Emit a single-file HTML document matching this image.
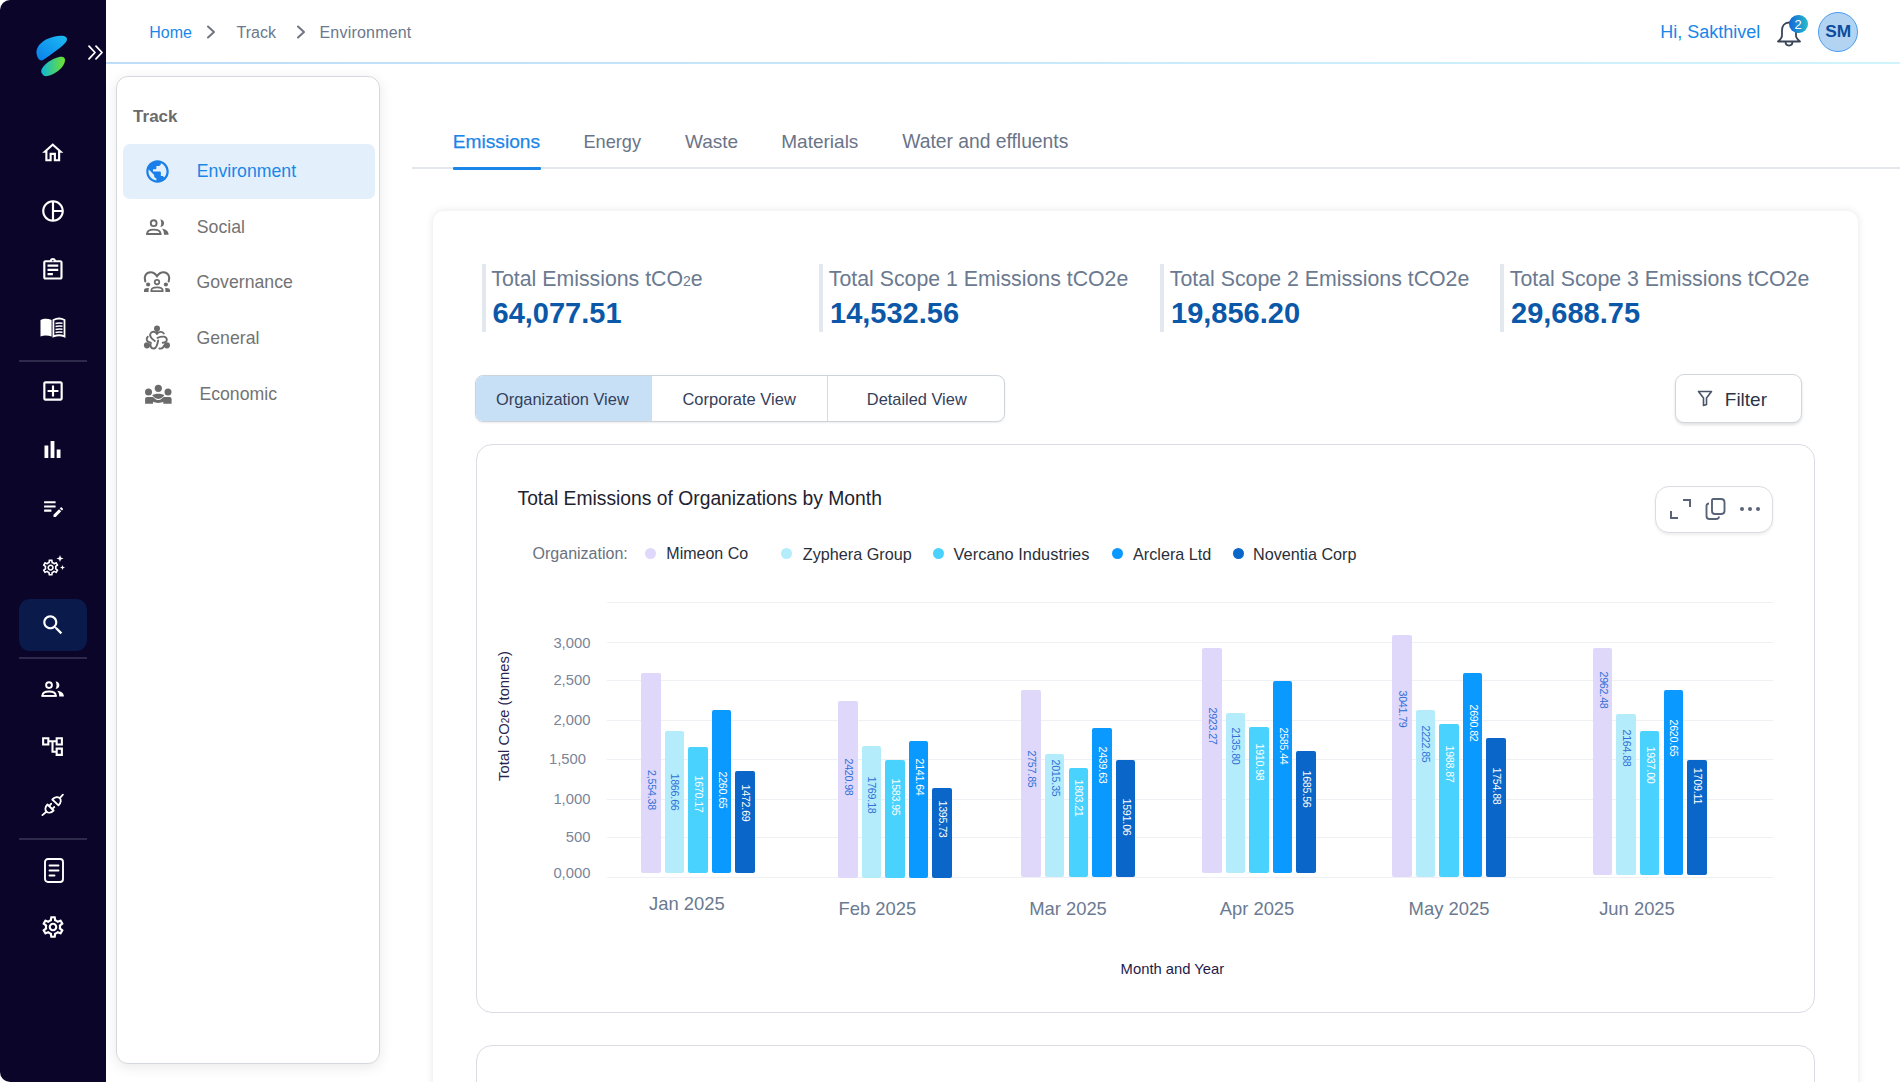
<!DOCTYPE html><html><head><meta charset="utf-8"><style>
*{margin:0;padding:0;box-sizing:border-box}
html,body{width:1900px;height:1082px;overflow:hidden;background:#fff;font-family:"Liberation Sans",sans-serif}
.t{position:absolute;white-space:nowrap}
.ic{position:absolute;overflow:visible}
.abs{position:absolute}
</style></head><body>
<div class="abs" style="left:0;top:0;width:106px;height:1082px;background:#0B0529;border-radius:10px 0 0 10px"></div>
<svg class="ic" style="left:30px;top:30px;width:44px;height:52px" viewBox="30 30 44 52">
<defs><linearGradient id="lg1" x1="0" y1="1" x2="1" y2="0"><stop offset="0" stop-color="#0A7FEA"/><stop offset="1" stop-color="#1DBBF3"/></linearGradient>
<linearGradient id="lg2" x1="0" y1="0" x2="1" y2="0"><stop offset="0" stop-color="#10B6D8"/><stop offset="1" stop-color="#6FE22C"/></linearGradient></defs>
<path d="M37 55.5 C35 50 38 44 46 39.5 C54 35.5 63 34.5 66 37 C68.5 39.5 66 43 61 47 C55 51.5 48 57 43 60 C40 61.5 38 59 37 55.5Z" fill="url(#lg1)"/>
<path d="M42 73.5 C40 71 42 67 47 63 C53 58.5 59.5 56 63 57 C66 58 65.5 62.5 62.5 66.5 C59 71 53 75 47.5 76 C44.5 76.5 43 75.5 42 73.5Z" fill="url(#lg2)"/>
</svg>
<svg class="ic" style="left:88px;top:45px;width:16px;height:15px" viewBox="0 0 16 15" fill="none" stroke="#fff" stroke-width="1.8" stroke-linecap="round" stroke-linejoin="round"><path d="M1 1.2 L7 7.5 L1 13.8"/><path d="M8 1.2 L14 7.5 L8 13.8"/></svg>
<div class="abs" style="left:19px;top:360px;width:68px;height:2px;background:#2E2A4B"></div>
<div class="abs" style="left:19px;top:657px;width:68px;height:2px;background:#2E2A4B"></div>
<div class="abs" style="left:19px;top:838px;width:68px;height:2px;background:#2E2A4B"></div>
<div class="abs" style="left:19px;top:599px;width:68px;height:52px;background:#0A1A4B;border-radius:11px"></div>
<svg class="ic" style="left:40.1px;top:140px;width:25.5px;height:25.5px;" viewBox="0 0 24 24" fill="#FFFFFF"><path d="M12 5.69l5 4.5V18h-2v-6H9v6H7v-7.81l5-4.5M12 3L2 12h3v8h6v-6h2v6h6v-8h3L12 3z"/></svg>
<svg class="ic" style="left:39.5px;top:198px;width:26px;height:26px;" viewBox="0 0 24 24" fill="#FFFFFF"><path d="M12 2C6.48 2 2 6.48 2 12s4.48 10 10 10 10-4.48 10-10S17.52 2 12 2zm7.93 9H13V4.07c3.61.45 6.48 3.32 6.93 6.93zM4 12c0-4.07 3.06-7.44 7-7.93v15.86c-3.94-.49-7-3.86-7-7.930zm9 7.93V13h6.93c-.45 3.61-3.32 6.48-6.93 6.93z"/></svg>
<svg class="ic" style="left:40px;top:257.4px;width:25.8px;height:25.8px;" viewBox="0 0 24 24" fill="#FFFFFF"><path d="M19 3h-4.18C14.4 1.84 13.3 1 12 1s-2.4.84-2.82 2H5c-1.1 0-2 .9-2 2v14c0 1.1.9 2 2 2h14c1.1 0 2-.9 2-2V5c0-1.1-.9-2-2-2zm-7-.25c.41 0 .75.34.75.75s-.34.75-.75.75-.75-.34-.75-.75.34-.75.75-.75zM19 19H5V5h14v14zM7 15h5v2H7zm0-4h10v2H7zm0-4h10v2H7z"/></svg>
<svg class="ic" style="left:40px;top:317.5px;width:25px;height:19px" viewBox="0 0 25 19" fill="#fff"><path d="M0.5 2 C3.5 0.3 8 0.2 11.6 2 V18.5 C8 17 3.5 17 0.5 18.5Z"/><path d="M13.4 2 C17 0.2 21.5 0.3 24.5 2 V18.5 C21.5 17 17 17 13.4 18.5Z" fill="none" stroke="#fff" stroke-width="1.8"/><path d="M15.5 5.5 C17.8 4.8 20.2 4.8 22.5 5.3 M15.5 8.5 C17.8 7.8 20.2 7.8 22.5 8.3 M15.5 11.5 C17.8 10.8 20.2 10.8 22.5 11.3 M15.5 14.5 C17.8 13.8 20.2 13.8 22.5 14.3" stroke="#fff" stroke-width="1.4" fill="none"/></svg>
<svg class="ic" style="left:39.5px;top:378px;width:26px;height:26px;" viewBox="0 0 24 24" fill="#FFFFFF"><path d="M19 3H5c-1.11 0-2 .9-2 2v14c0 1.1.89 2 2 2h14c1.1 0 2-.9 2-2V5c0-1.1-.9-2-2-2zm0 16H5V5h14v14zm-8-2h2v-4h4v-2h-4V7h-2v4H7v2h4z"/></svg>
<svg class="ic" style="left:40px;top:437px;width:25px;height:24px;" viewBox="0 0 24 24" fill="#FFFFFF"><path d="M4 8.5h3.8v12.5H4zM10.1 4h3.8v17h-3.8zM16.2 12.5H20v8.5h-3.8z"/></svg>
<svg class="ic" style="left:40.5px;top:495px;width:25px;height:25px;" viewBox="0 0 24 24" fill="#FFFFFF"><path d="M3 10h11v2H3v-2zm0-2h11V6H3v2zm0 8h7v-2H3v2zm15.01-3.13l.71-.71c.39-.39 1.02-.39 1.41 0l.71.71c.39.39.39 1.02 0 1.410l-.71.71-2.12-2.12zm-.71.71l-5.3 5.3V21h2.12l5.3-5.3-2.12-2.12z"/></svg>
<svg class="ic" style="left:41px;top:554px;width:24px;height:24px" viewBox="0 0 24 24" fill="#fff"><g transform="translate(0,4) scale(0.8)"><path d="M19.43 12.98c.04-.32.07-.64.07-.98 0-.34-.03-.66-.07-.98l2.11-1.65c.19-.15.24-.42.12-.64l-2-3.46c-.09-.16-.26-.25-.44-.25-.06 0-.12.01-.17.03l-2.49 1c-.52-.4-1.08-.73-1.69-.98l-.38-2.65C14.46 2.18 14.25 2 14 2h-4c-.25 0-.46.18-.49.42l-.38 2.65c-.61.25-1.17.59-1.69.98l-2.49-1c-.06-.02-.12-.03-.18-.03-.17 0-.34.09-.43.25l-2 3.46c-.13.22-.07.49.12.64l2.11 1.65c-.04.32-.07.65-.07.98 0 .33.03.66.07.98l-2.11 1.65c-.19.15-.24.42-.12.64l2 3.46c.09.16.26.25.44.25.06 0 .12-.01.17-.03l2.49-1c.52.4 1.08.73 1.69.98l.38 2.65c.03.24.24.42.49.42h4c.25 0 .46-.18.49-.42l.38-2.65c.61-.25 1.17-.59 1.69-.98l2.49 1c.06.02.12.03.18.03.17 0 .34-.09.43-.25l2-3.46c.12-.22.07-.49-.12-.64l-2.11-1.65zm-1.98-1.71c.04.31.05.52.05.73 0 .21-.02.43-.05.73l-.14 1.13.89.7 1.08.84-.7 1.21-1.27-.51-1.04-.42-.9.68c-.43.32-.84.56-1.25.73l-1.06.43-.16 1.13-.2 1.35h-1.4l-.19-1.35-.16-1.13-1.06-.43c-.43-.18-.83-.41-1.23-.71l-.91-.7-1.06.43-1.27.51-.7-1.21 1.08-.84.89-.7-.14-1.13c-.03-.31-.05-.54-.05-.74s.02-.43.05-.73l.14-1.13-.89-.7-1.08-.84.7-1.21 1.27.51 1.04.42.9-.68c.43-.32.84-.56 1.25-.73l1.06-.43.16-1.13.2-1.35h1.39l.19 1.35.16 1.13 1.06.43c.43.18.83.41 1.23.71l.91.7 1.06-.43 1.27-.51.7 1.21-1.07.85-.89.7.14 1.13zM12 8c-2.21 0-4 1.79-4 4s1.79 4 4 4 4-1.79 4-4-1.79-4-4-4zm0 6c-1.1 0-2-.9-2-2s.9-2 2-2 2 .9 2 2-.9 2-2 2z"/></g><path d="M19 1 L19.9 3.6 L22.5 4.5 L19.9 5.4 L19 8 L18.1 5.4 L15.5 4.5 L18.1 3.6Z"/><path d="M21.5 11 L22.2 12.8 L24 13.5 L22.2 14.2 L21.5 16 L20.8 14.2 L19 13.5 L20.8 12.8Z"/></svg>
<svg class="ic" style="left:40px;top:612px;width:26px;height:26px;" viewBox="0 0 24 24" fill="#FFFFFF"><path d="M15.5 14h-.79l-.28-.27C15.41 12.59 16 11.11 16 9.5 16 5.91 13.09 3 9.5 3S3 5.91 3 9.5 5.91 16 9.5 16c1.61 0 3.09-.59 4.23-1.57l.27.28v.79l5 4.99L20.49 19l-4.99-5zm-6 0C7.01 14 5 11.99 5 9.5S7.01 5 9.5 5 14 7.01 14 9.5 11.99 14 9.5 14z"/></svg>
<svg class="ic" style="left:36px;top:676px;width:32px;height:24px" viewBox="36 676 32 24" fill="#fff"><g transform="translate(-104.7,461.9)"><circle cx="153.7" cy="223.2" r="2.9" fill="none" stroke="#fff" stroke-width="1.9"/><path d="M160.3 219.6 C165.3 219.6 165.3 227 160.3 227 C161.6 225 161.6 221.6 160.3 219.6Z"/><path d="M147.2 234 V233.6 C147.2 231 150.2 229.6 153.8 229.6 C157.4 229.6 160.4 231 160.4 233.6 V234Z" fill="none" stroke="#fff" stroke-width="1.9"/><path d="M162 228.8 C166.5 229.2 168.6 231.5 168.6 234.7 H164 C164 232.2 163.4 230.4 162 228.8Z"/><rect x="146.2" y="233.2" width="15.2" height="1.5"/></g></svg>
<svg class="ic" style="left:40px;top:734px;width:25px;height:25px;" viewBox="0 0 24 24" fill="#FFFFFF"><path d="M22 11V3h-7v3H9V3H2v8h7V8h2v10h4v3h7v-8h-7v3h-2V8h2v3h7zM7 9H4V5h3v4zm10 6h3v4h-3v-4zm0-10h3v4h-3V5z"/></svg>
<svg class="ic" style="left:36px;top:788px;width:34px;height:34px" viewBox="36 788 34 34" fill="none" stroke="#fff" stroke-width="1.8" stroke-linecap="round" stroke-linejoin="round"><path d="M47.5 804.5 C42.05 809.95 48.15 815.95 53.6 810.5 Z"/><path d="M49.3 805.9 L51.1 803.8 M52.3 808.9 L54.3 807"/><path d="M46.4 811.7 L42.4 815.1"/><path d="M52.3 799.5 C58.03 793.77 64.23 799.67 58.5 805.4 Z"/><path d="M59.8 798.1 L62.9 794.7"/></svg>
<svg class="ic" style="left:44px;top:858px;width:20px;height:25px" viewBox="0 0 20 25" fill="none" stroke="#fff" stroke-width="1.9"><rect x="1" y="1" width="18" height="23" rx="3"/><path d="M5.5 7.5h9M5.5 12.5h9M5.5 17.5h5" stroke-linecap="round"/></svg>
<svg class="ic" style="left:39.5px;top:914px;width:26px;height:26px;" viewBox="0 0 24 24" fill="#FFFFFF"><path d="M19.43 12.98c.04-.32.07-.64.07-.98 0-.34-.03-.66-.07-.98l2.11-1.65c.19-.15.24-.42.12-.64l-2-3.46c-.09-.16-.26-.25-.44-.25-.06 0-.12.01-.17.03l-2.49 1c-.52-.4-1.08-.73-1.69-.98l-.38-2.65C14.46 2.18 14.25 2 14 2h-4c-.25 0-.46.18-.49.42l-.38 2.65c-.61.25-1.17.59-1.69.98l-2.49-1c-.06-.02-.12-.03-.18-.03-.17 0-.34.09-.43.25l-2 3.46c-.13.22-.07.49.12.64l2.11 1.65c-.04.32-.07.65-.07.98 0 .33.03.66.07.98l-2.11 1.65c-.19.15-.24.42-.12.64l2 3.46c.09.16.26.25.44.25.06 0 .12-.01.17-.03l2.49-1c.52.4 1.08.73 1.69.98l.38 2.65c.03.24.24.42.49.42h4c.25 0 .46-.18.49-.42l.38-2.65c.61-.25 1.17-.59 1.69-.98l2.49 1c.06.02.12.03.18.03.17 0 .34-.09.43-.25l2-3.46c.12-.22.07-.49-.12-.64l-2.11-1.65zm-1.98-1.71c.04.31.05.52.05.73 0 .21-.02.43-.05.73l-.14 1.13.89.7 1.08.84-.7 1.21-1.27-.51-1.04-.42-.9.68c-.43.32-.84.56-1.25.73l-1.06.43-.16 1.13-.2 1.35h-1.4l-.19-1.35-.16-1.13-1.06-.43c-.43-.18-.83-.41-1.23-.71l-.91-.7-1.06.43-1.27.51-.7-1.21 1.08-.84.89-.7-.14-1.13c-.03-.31-.05-.54-.05-.74s.02-.43.05-.73l.14-1.13-.89-.7-1.08-.84.7-1.21 1.27.51 1.04.42.9-.68c.43-.32.84-.56 1.25-.73l1.06-.43.16-1.13.2-1.35h1.39l.19 1.35.16 1.13 1.06.43c.43.18.83.41 1.23.71l.91.7 1.06-.43 1.27-.51.7 1.21-1.07.85-.89.7.14 1.13zM12 8c-2.21 0-4 1.79-4 4s1.79 4 4 4 4-1.79 4-4-1.79-4-4-4zm0 6c-1.1 0-2-.9-2-2s.9-2 2-2 2 .9 2 2-.9 2-2 2z"/></svg>
<div class="abs" style="left:106px;top:62px;width:1794px;height:2px;background:linear-gradient(90deg,#BEDDF9,#D0F4FC)"></div>
<div class="t " style="left:149.3px;top:24.9px;font-size:16px;line-height:16px;color:#1A86E8;">Home</div>
<svg class="ic" style="left:206px;top:25px;width:10px;height:14px" viewBox="0 0 10 14" fill="none" stroke="#6E7480" stroke-width="2" stroke-linecap="round" stroke-linejoin="round"><path d="M2 1.5 L8 7 L2 12.5"/></svg>
<div class="t " style="left:236.6px;top:24.9px;font-size:16px;line-height:16px;color:#6B788D;">Track</div>
<svg class="ic" style="left:296px;top:25px;width:10px;height:14px" viewBox="0 0 10 14" fill="none" stroke="#6E7480" stroke-width="2" stroke-linecap="round" stroke-linejoin="round"><path d="M2 1.5 L8 7 L2 12.5"/></svg>
<div class="t " style="left:319.5px;top:24.9px;font-size:16px;line-height:16px;color:#6B788D;letter-spacing:0.2px">Environment</div>
<div class="t " style="left:1660.3px;top:22.7px;font-size:18px;line-height:18px;color:#1A86E8;">Hi, Sakthivel</div>
<svg class="ic" style="left:1776px;top:19px;width:26px;height:28px" viewBox="0 0 26 28" fill="none" stroke="#3A4558" stroke-width="1.8" stroke-linejoin="round"><path d="M13 3.5 C8.5 3.5 6 7 6 11 V16.5 C6 19 4.5 20.5 2 22.5 H24 C21.5 20.5 20 19 20 16.5 V11 C20 7 17.5 3.5 13 3.5Z"/><path d="M9.5 22.5 C9.5 25 11 26.5 13 26.5 C15 26.5 16.5 25 16.5 22.5"/></svg>
<div class="abs" style="left:1789px;top:14.5px;width:18.5px;height:18.5px;border-radius:50%;background:linear-gradient(90deg,#1565D8,#29BBC9)"></div>
<div class="t " style="left:1794.6px;top:18.0px;font-size:13px;line-height:13px;color:#fff;">2</div>
<div class="abs" style="left:1818px;top:12px;width:40px;height:40px;border-radius:50%;background:#B3D3F2;border:1px solid #4A9CF0"></div>
<div class="t " style="left:1825.3px;top:23.4px;font-size:17.3px;line-height:17.3px;color:#0B4C9C;font-weight:700;">SM</div>
<div class="abs" style="left:116px;top:75.5px;width:264px;height:988.5px;background:#fff;border:1.8px solid #D5D9DE;border-radius:12px;box-shadow:0 3px 14px rgba(0,0,0,0.09)"></div>
<div class="t " style="left:133.1px;top:107.8px;font-size:17px;line-height:17px;color:#6B6B6B;font-weight:700;">Track</div>
<div class="abs" style="left:123px;top:144px;width:252px;height:55px;background:#E3F0FC;border-radius:7px"></div>
<svg class="ic" style="left:143.5px;top:158px;width:27px;height:27px;" viewBox="0 0 24 24" fill="#1A7FE8"><path d="M12 2C6.48 2 2 6.48 2 12s4.48 10 10 10 10-4.48 10-10S17.52 2 12 2zm-1 17.93c-3.95-.49-7-3.85-7-7.93 0-.62.08-1.21.21-1.79L9 15v1c0 1.1.9 2 2 2v1.93zm6.9-2.54c-.26-.81-1-1.39-1.9-1.39h-1v-3c0-.55-.45-1-1-1H8v-2h2c.55 0 1-.45 1-1V7h2c1.1 0 2-.9 2-2v-.41c2.93 1.19 5 4.06 5 7.41 0 2.08-.8 3.97-2.1 5.39z"/></svg>
<div class="t " style="left:196.8px;top:163.4px;font-size:17.7px;line-height:17.7px;color:#1A86E8;">Environment</div>
<svg class="ic" style="left:140px;top:214px;width:32px;height:26px" viewBox="140 214 32 26" fill="#6B6B6B" stroke="none"><circle cx="153.7" cy="223.2" r="2.9" fill="none" stroke="#6B6B6B" stroke-width="1.9"/><path d="M160.3 219.6 C165.3 219.6 165.3 227 160.3 227 C161.6 225 161.6 221.6 160.3 219.6Z"/><path d="M147.2 234 V233.6 C147.2 231 150.2 229.6 153.8 229.6 C157.4 229.6 160.4 231 160.4 233.6 V234Z" fill="none" stroke="#6B6B6B" stroke-width="1.9"/><path d="M162 228.8 C166.5 229.2 168.6 231.5 168.6 234.7 H164 C164 232.2 163.4 230.4 162 228.8Z"/><rect x="146.2" y="233.2" width="15.2" height="1.5"/></svg>
<div class="t " style="left:196.8px;top:218.9px;font-size:17.7px;line-height:17.7px;color:#737373;">Social</div>
<svg class="ic" style="left:140px;top:268px;width:34px;height:28px" viewBox="140 268 34 28" fill="#6B6B6B"><path d="M145.3 281.4 C143.8 277.5 145.2 272.3 150.6 272.2 C153.3 272.2 155.5 273.9 157 276.2 C158.5 273.9 160.7 272.2 163.4 272.2 C168.8 272.3 170.2 277.5 168.7 281.4" fill="none" stroke="#6B6B6B" stroke-width="2.1" stroke-linecap="round"/><circle cx="157" cy="282.1" r="2.3" fill="none" stroke="#6B6B6B" stroke-width="1.7"/><circle cx="148.1" cy="284.5" r="2.1"/><circle cx="165.9" cy="284.5" r="2.1"/><path d="M151.3 291.2 V290.6 C151.3 288.4 153.8 287.4 157 287.4 C160.2 287.4 162.7 288.4 162.7 290.6 V291.2Z" fill="none" stroke="#6B6B6B" stroke-width="1.7"/><path d="M144 292 V290.2 C144 288.8 145.4 288 147.8 288 H148.9 C148.6 288.8 148.6 289.6 148.6 290.4 V292Z"/><path d="M170 292 V290.2 C170 288.8 168.6 288 166.2 288 H165.1 C165.4 288.8 165.4 289.6 165.4 290.4 V292Z"/></svg>
<div class="t " style="left:196.5px;top:274.4px;font-size:17.7px;line-height:17.7px;color:#737373;">Governance</div>
<svg class="ic" style="left:140px;top:322px;width:34px;height:32px" viewBox="140 322 34 32" fill="#6B6B6B"><circle cx="157" cy="328.5" r="3"/><circle cx="147" cy="345.3" r="3.1"/><circle cx="166.9" cy="345.3" r="3.1"/><path d="M157 331 L157 334 M157 334 C155.5 331.5 152.5 331 150.8 333 C149.3 335 150.2 337.8 154.8 341 M157 334 C158.5 331.8 161.8 330.8 163.8 333.5 M157.5 337.8 C162 336 166 336 166.8 339.2 C167.3 341.5 165 342.6 162.7 342.7 M158.1 340.5 C157.5 344.5 156.5 348.3 153.8 348.5 C151 348.7 149.8 346 150.8 343 M147.8 336.8 C146 338.5 146 341.8 150.8 342.6 M159.4 348.5 C161.8 349 163.5 347.5 164 345.6" fill="none" stroke="#6B6B6B" stroke-width="1.9" stroke-linecap="round"/></svg>
<div class="t " style="left:196.5px;top:329.7px;font-size:17.7px;line-height:17.7px;color:#737373;">General</div>
<svg class="ic" style="left:140px;top:380px;width:36px;height:28px" viewBox="140 380 36 28" fill="#6B6B6B"><circle cx="158.3" cy="388.3" r="3.6"/><circle cx="148.5" cy="392.1" r="3.5"/><circle cx="168" cy="392.1" r="3.5"/><path d="M152.2 395.3 C155 393.3 161.6 393.3 164.4 395.3 C163 397 161 398.9 158.3 398.9 C155.6 398.9 153.6 397 152.2 395.3Z"/><path d="M145.1 403.8 V399 C145.1 397.8 146 396.9 147.2 396.9 H152 C153.2 396.9 154 397.6 154.8 398.4 C156 399.6 157 400.1 158.3 400.1 C159.6 400.1 160.6 399.6 161.8 398.4 C162.6 397.6 163.4 396.9 164.6 396.9 H169.5 C170.7 396.9 171.6 397.8 171.6 399 V403.8 H163.3 V401.8 C162 402.6 160.3 402.9 158.3 402.9 C156.3 402.9 154.6 402.6 153 401.8 V403.8Z"/></svg>
<div class="t " style="left:199.4px;top:385.7px;font-size:17.7px;line-height:17.7px;color:#737373;">Economic</div>
<div class="abs" style="left:412px;top:167px;width:1488px;height:2px;background:#E4E8EC"></div>
<div class="abs" style="left:452.5px;top:166.5px;width:88.5px;height:3px;background:#1A86E8;border-radius:1px"></div>
<div class="t " style="left:452.7px;top:131.9px;font-size:19.2px;line-height:19.2px;color:#1A86E8;-webkit-text-stroke:0.25px #1A86E8">Emissions</div>
<div class="t " style="left:583.4px;top:132.8px;font-size:18.2px;line-height:18.2px;color:#6A7488;">Energy</div>
<div class="t " style="left:685.0px;top:132.1px;font-size:19px;line-height:19px;color:#6A7488;">Waste</div>
<div class="t " style="left:781.3px;top:132.1px;font-size:19px;line-height:19px;color:#6A7488;">Materials</div>
<div class="t " style="left:902.2px;top:131.9px;font-size:19.3px;line-height:19.3px;color:#6A7488;">Water and effluents</div>
<div class="abs" style="left:433px;top:210.8px;width:1425px;height:900px;background:#fff;border-radius:11px;box-shadow:0 0 9px rgba(0,0,0,0.10)"></div>
<div class="abs" style="left:481.5px;top:264px;width:4px;height:68px;background:#E3E7EE"></div>
<div class="t " style="left:491.3px;top:268.5px;font-size:21.3px;line-height:21.3px;color:#6B7A90;">Total Emissions tCO<span style="font-size:14px">2</span>e</div>
<div class="t " style="left:492.5px;top:298.7px;font-size:29px;line-height:29px;color:#0B57A8;font-weight:700;">64,077.51</div>
<div class="abs" style="left:819px;top:264px;width:4px;height:68px;background:#E3E7EE"></div>
<div class="t " style="left:828.8px;top:268.5px;font-size:21.3px;line-height:21.3px;color:#6B7A90;">Total Scope 1 Emissions tCO2e</div>
<div class="t " style="left:830.0px;top:298.7px;font-size:29px;line-height:29px;color:#0B57A8;font-weight:700;">14,532.56</div>
<div class="abs" style="left:1160px;top:264px;width:4px;height:68px;background:#E3E7EE"></div>
<div class="t " style="left:1169.8px;top:268.5px;font-size:21.3px;line-height:21.3px;color:#6B7A90;">Total Scope 2 Emissions tCO2e</div>
<div class="t " style="left:1171.0px;top:298.7px;font-size:29px;line-height:29px;color:#0B57A8;font-weight:700;">19,856.20</div>
<div class="abs" style="left:1500px;top:264px;width:4px;height:68px;background:#E3E7EE"></div>
<div class="t " style="left:1509.8px;top:268.5px;font-size:21.3px;line-height:21.3px;color:#6B7A90;">Total Scope 3 Emissions tCO2e</div>
<div class="t " style="left:1511.0px;top:298.7px;font-size:29px;line-height:29px;color:#0B57A8;font-weight:700;">29,688.75</div>
<div class="abs" style="left:475px;top:375px;width:530px;height:47px;border:1.5px solid #CDD3DB;border-radius:8px;overflow:hidden;box-shadow:0 1px 2px rgba(0,0,0,0.08)"><div class="abs" style="left:0;top:0;width:176px;height:47px;background:#C8E0F6"></div><div class="abs" style="left:175px;top:0;width:1.2px;height:47px;background:#D6DBE1"></div><div class="abs" style="left:351px;top:0;width:1.2px;height:47px;background:#D6DBE1"></div></div>
<div class="t " style="left:496.0px;top:391.3px;font-size:16.4px;line-height:16.4px;color:#34405A;">Organization View</div>
<div class="t " style="left:682.4px;top:391.2px;font-size:16.5px;line-height:16.5px;color:#34405A;">Corporate View</div>
<div class="t " style="left:866.8px;top:391.3px;font-size:16.4px;line-height:16.4px;color:#34405A;">Detailed View</div>
<div class="abs" style="left:1675px;top:374px;width:127px;height:49px;border:1.5px solid #D0D6DE;border-radius:9px;box-shadow:0 2px 3px rgba(0,0,0,0.12);background:#fff"></div>
<svg class="ic" style="left:1697px;top:390px;width:16px;height:17px" viewBox="0 0 16 17" fill="none" stroke="#4A5568" stroke-width="1.6" stroke-linejoin="round"><path d="M1.5 1.5 H14.5 L9.5 8 V14.5 L6.5 15.5 V8Z"/></svg>
<div class="t " style="left:1724.8px;top:390.3px;font-size:19px;line-height:19px;color:#2A3548;">Filter</div>
<div class="abs" style="left:476px;top:444px;width:1339px;height:569px;border:1.5px solid #D9DCE3;border-radius:16px;background:#fff"></div>
<div class="abs" style="left:476px;top:1045px;width:1339px;height:100px;border:1.5px solid #D9DCE3;border-radius:16px;background:#fff"></div>
<div class="t " style="left:517.5px;top:488.7px;font-size:19.3px;line-height:19.3px;color:#1E2330;">Total Emissions of Organizations by Month</div>
<div class="abs" style="left:1655px;top:486px;width:118px;height:47px;border:1.5px solid #DADDE3;border-radius:14px;box-shadow:0 2px 3px rgba(0,0,0,0.07);background:#fff"></div>
<svg class="ic" style="left:1670px;top:499px;width:21px;height:20px" viewBox="0 0 21 20" fill="none" stroke="#5A6478" stroke-width="2"><path d="M13 1 H20 V8"/><path d="M1 12 V19 H8"/></svg>
<svg class="ic" style="left:1705px;top:498px;width:21px;height:22px" viewBox="0 0 21 22" fill="none" stroke="#5A6478" stroke-width="1.9" stroke-linejoin="round"><path d="M8 1 H16 C18 1 19.5 2.5 19.5 4.5 V13 C19.5 15 18 16 16 16 H10 C8.5 16 7 15 7 13 V2.5 C7 1.5 7.5 1 8 1Z"/><path d="M4 5.5 C2.5 5.5 1.5 6.5 1.5 8 V18 C1.5 19.8 2.5 21 4.5 21 H11 C13 21 14 20 14 18.5"/></svg>
<div class="abs" style="left:1739.8px;top:506.8px;width:4.4px;height:4.4px;border-radius:50%;background:#5A6478"></div>
<div class="abs" style="left:1747.8px;top:506.8px;width:4.4px;height:4.4px;border-radius:50%;background:#5A6478"></div>
<div class="abs" style="left:1755.8px;top:506.8px;width:4.4px;height:4.4px;border-radius:50%;background:#5A6478"></div>
<div class="t " style="left:532.6px;top:546.0px;font-size:16px;line-height:16px;color:#6B7280;">Organization:</div>
<div class="abs" style="left:645.0px;top:548px;width:11px;height:11px;border-radius:50%;background:#DFD8FB"></div>
<div class="t " style="left:666.3px;top:546.0px;font-size:16px;line-height:16px;color:#2A2F3A;">Mimeon Co</div>
<div class="abs" style="left:781.0px;top:548px;width:11px;height:11px;border-radius:50%;background:#B5ECFC"></div>
<div class="t " style="left:802.8px;top:545.8px;font-size:16.2px;line-height:16.2px;color:#2A2F3A;">Zyphera Group</div>
<div class="abs" style="left:932.9px;top:548px;width:11px;height:11px;border-radius:50%;background:#4AD2FE"></div>
<div class="t " style="left:953.6px;top:545.6px;font-size:16.4px;line-height:16.4px;color:#2A2F3A;">Vercano Industries</div>
<div class="abs" style="left:1112.0px;top:548px;width:11px;height:11px;border-radius:50%;background:#0A99FF"></div>
<div class="t " style="left:1133.0px;top:545.8px;font-size:16.2px;line-height:16.2px;color:#2A2F3A;">Arclera Ltd</div>
<div class="abs" style="left:1232.5px;top:548px;width:11px;height:11px;border-radius:50%;background:#0A66C8"></div>
<div class="t " style="left:1253.0px;top:545.8px;font-size:16.2px;line-height:16.2px;color:#2A2F3A;">Noventia Corp</div>
<div class="abs" style="left:607px;top:601.5px;width:1166px;height:1px;background:#EEF0F3"></div>
<div class="abs" style="left:607px;top:641.5px;width:1166px;height:1px;background:#EEF0F3"></div>
<div class="abs" style="left:607px;top:679.5px;width:1166px;height:1px;background:#EEF0F3"></div>
<div class="abs" style="left:607px;top:719.5px;width:1166px;height:1px;background:#EEF0F3"></div>
<div class="abs" style="left:607px;top:758.5px;width:1166px;height:1px;background:#EEF0F3"></div>
<div class="abs" style="left:607px;top:798.5px;width:1166px;height:1px;background:#EEF0F3"></div>
<div class="abs" style="left:607px;top:836.5px;width:1166px;height:1px;background:#EEF0F3"></div>
<div class="abs" style="left:607px;top:876.5px;width:1166px;height:1px;background:#EEF0F3"></div>
<div class="t" style="right:1309.6px;top:635.8000000000001px;font-size:14.8px;line-height:15px;color:#7A8599">3,000</div>
<div class="t" style="right:1309.6px;top:673.1px;font-size:14.8px;line-height:15px;color:#7A8599">2,500</div>
<div class="t" style="right:1309.6px;top:712.6px;font-size:14.8px;line-height:15px;color:#7A8599">2,000</div>
<div class="t" style="right:1314px;top:752.1px;font-size:14.8px;line-height:15px;color:#7A8599">1,500</div>
<div class="t" style="right:1309.6px;top:791.6px;font-size:14.8px;line-height:15px;color:#7A8599">1,000</div>
<div class="t" style="right:1309.6px;top:829.8000000000001px;font-size:14.8px;line-height:15px;color:#7A8599">500</div>
<div class="t" style="right:1309.6px;top:865.9px;font-size:14.8px;line-height:15px;color:#7A8599">0,000</div>
<div class="t" style="left:505px;top:715.5px;font-size:14.8px;line-height:15px;color:#2A2550;transform:translate(-50%,-50%) rotate(-90deg)">Total CO<span style="font-size:10px">2</span>e (tonnes)</div>
<div class="abs" style="left:641.0px;top:673px;width:19.5px;height:200px;background:#DFD8FB;border-radius:2px"></div>
<div class="t" style="left:650.8px;top:790px;font-size:10.7px;line-height:11px;color:#2F6FD6;transform:translate(-50%,-50%) rotate(90deg);letter-spacing:-0.2px">2,554.38</div>
<div class="abs" style="left:664.6px;top:731px;width:19.5px;height:142px;background:#B5ECFC;border-radius:2px"></div>
<div class="t" style="left:674.4px;top:792px;font-size:10.7px;line-height:11px;color:#2F6FD6;transform:translate(-50%,-50%) rotate(90deg);letter-spacing:-0.2px">1866.66</div>
<div class="abs" style="left:688.2px;top:747px;width:19.5px;height:126px;background:#4AD2FE;border-radius:2px"></div>
<div class="t" style="left:698.0px;top:794px;font-size:10.7px;line-height:11px;color:#FFFFFF;transform:translate(-50%,-50%) rotate(90deg);letter-spacing:-0.2px">1670.17</div>
<div class="abs" style="left:711.8px;top:710px;width:19.5px;height:163px;background:#0A99FF;border-radius:2px"></div>
<div class="t" style="left:721.5px;top:790px;font-size:10.7px;line-height:11px;color:#FFFFFF;transform:translate(-50%,-50%) rotate(90deg);letter-spacing:-0.2px">2260.65</div>
<div class="abs" style="left:735.4px;top:771px;width:19.5px;height:102px;background:#0A66C8;border-radius:2px"></div>
<div class="t" style="left:745.1px;top:803px;font-size:10.7px;line-height:11px;color:#FFFFFF;transform:translate(-50%,-50%) rotate(90deg);letter-spacing:-0.2px">1472.69</div>
<div class="t" style="left:686.8px;top:903px;font-size:18.4px;line-height:19px;color:#6B7A90;transform:translate(-50%,-50%)">Jan 2025</div>
<div class="abs" style="left:838.0px;top:701px;width:19.5px;height:177px;background:#DFD8FB;border-radius:2px"></div>
<div class="t" style="left:847.8px;top:776.5px;font-size:10.7px;line-height:11px;color:#2F6FD6;transform:translate(-50%,-50%) rotate(90deg);letter-spacing:-0.2px">2420.98</div>
<div class="abs" style="left:861.6px;top:746px;width:19.5px;height:132px;background:#B5ECFC;border-radius:2px"></div>
<div class="t" style="left:871.4px;top:795px;font-size:10.7px;line-height:11px;color:#2F6FD6;transform:translate(-50%,-50%) rotate(90deg);letter-spacing:-0.2px">1769.18</div>
<div class="abs" style="left:885.2px;top:760px;width:19.5px;height:118px;background:#4AD2FE;border-radius:2px"></div>
<div class="t" style="left:895.0px;top:796.6px;font-size:10.7px;line-height:11px;color:#FFFFFF;transform:translate(-50%,-50%) rotate(90deg);letter-spacing:-0.2px">1583.95</div>
<div class="abs" style="left:908.8px;top:741px;width:19.5px;height:137px;background:#0A99FF;border-radius:2px"></div>
<div class="t" style="left:918.5px;top:777px;font-size:10.7px;line-height:11px;color:#FFFFFF;transform:translate(-50%,-50%) rotate(90deg);letter-spacing:-0.2px">2141.64</div>
<div class="abs" style="left:932.4px;top:788px;width:19.5px;height:90px;background:#0A66C8;border-radius:2px"></div>
<div class="t" style="left:942.1px;top:819px;font-size:10.7px;line-height:11px;color:#FFFFFF;transform:translate(-50%,-50%) rotate(90deg);letter-spacing:-0.2px">1395.73</div>
<div class="t" style="left:877.3px;top:908px;font-size:18.4px;line-height:19px;color:#6B7A90;transform:translate(-50%,-50%)">Feb 2025</div>
<div class="abs" style="left:1021.3px;top:690px;width:19.5px;height:187px;background:#DFD8FB;border-radius:2px"></div>
<div class="t" style="left:1031.0px;top:768.6px;font-size:10.7px;line-height:11px;color:#2F6FD6;transform:translate(-50%,-50%) rotate(90deg);letter-spacing:-0.2px">2757.85</div>
<div class="abs" style="left:1044.9px;top:754px;width:19.5px;height:123px;background:#B5ECFC;border-radius:2px"></div>
<div class="t" style="left:1054.6px;top:778px;font-size:10.7px;line-height:11px;color:#2F6FD6;transform:translate(-50%,-50%) rotate(90deg);letter-spacing:-0.2px">2015.35</div>
<div class="abs" style="left:1068.5px;top:768px;width:19.5px;height:109px;background:#4AD2FE;border-radius:2px"></div>
<div class="t" style="left:1078.2px;top:798px;font-size:10.7px;line-height:11px;color:#FFFFFF;transform:translate(-50%,-50%) rotate(90deg);letter-spacing:-0.2px">1803.21</div>
<div class="abs" style="left:1092.1px;top:728px;width:19.5px;height:149px;background:#0A99FF;border-radius:2px"></div>
<div class="t" style="left:1101.8px;top:765px;font-size:10.7px;line-height:11px;color:#FFFFFF;transform:translate(-50%,-50%) rotate(90deg);letter-spacing:-0.2px">2439.63</div>
<div class="abs" style="left:1115.7px;top:760px;width:19.5px;height:117px;background:#0A66C8;border-radius:2px"></div>
<div class="t" style="left:1125.5px;top:817px;font-size:10.7px;line-height:11px;color:#FFFFFF;transform:translate(-50%,-50%) rotate(90deg);letter-spacing:-0.2px">1591.06</div>
<div class="t" style="left:1068px;top:908px;font-size:18.4px;line-height:19px;color:#6B7A90;transform:translate(-50%,-50%)">Mar 2025</div>
<div class="abs" style="left:1202.0px;top:648px;width:19.5px;height:225px;background:#DFD8FB;border-radius:2px"></div>
<div class="t" style="left:1211.8px;top:725.7px;font-size:10.7px;line-height:11px;color:#2F6FD6;transform:translate(-50%,-50%) rotate(90deg);letter-spacing:-0.2px">2923.27</div>
<div class="abs" style="left:1225.6px;top:713px;width:19.5px;height:160px;background:#B5ECFC;border-radius:2px"></div>
<div class="t" style="left:1235.3px;top:746px;font-size:10.7px;line-height:11px;color:#2F6FD6;transform:translate(-50%,-50%) rotate(90deg);letter-spacing:-0.2px">2135.80</div>
<div class="abs" style="left:1249.2px;top:727px;width:19.5px;height:146px;background:#4AD2FE;border-radius:2px"></div>
<div class="t" style="left:1259.0px;top:762px;font-size:10.7px;line-height:11px;color:#FFFFFF;transform:translate(-50%,-50%) rotate(90deg);letter-spacing:-0.2px">1910.98</div>
<div class="abs" style="left:1272.8px;top:681px;width:19.5px;height:192px;background:#0A99FF;border-radius:2px"></div>
<div class="t" style="left:1282.5px;top:746px;font-size:10.7px;line-height:11px;color:#FFFFFF;transform:translate(-50%,-50%) rotate(90deg);letter-spacing:-0.2px">2585.44</div>
<div class="abs" style="left:1296.4px;top:751px;width:19.5px;height:122px;background:#0A66C8;border-radius:2px"></div>
<div class="t" style="left:1306.2px;top:789px;font-size:10.7px;line-height:11px;color:#FFFFFF;transform:translate(-50%,-50%) rotate(90deg);letter-spacing:-0.2px">1685.56</div>
<div class="t" style="left:1257px;top:908px;font-size:18.4px;line-height:19px;color:#6B7A90;transform:translate(-50%,-50%)">Apr 2025</div>
<div class="abs" style="left:1392.0px;top:635px;width:19.5px;height:242px;background:#DFD8FB;border-radius:2px"></div>
<div class="t" style="left:1401.8px;top:709px;font-size:10.7px;line-height:11px;color:#2F6FD6;transform:translate(-50%,-50%) rotate(90deg);letter-spacing:-0.2px">3041.79</div>
<div class="abs" style="left:1415.6px;top:710px;width:19.5px;height:167px;background:#B5ECFC;border-radius:2px"></div>
<div class="t" style="left:1425.3px;top:743.5px;font-size:10.7px;line-height:11px;color:#2F6FD6;transform:translate(-50%,-50%) rotate(90deg);letter-spacing:-0.2px">2222.85</div>
<div class="abs" style="left:1439.2px;top:724px;width:19.5px;height:153px;background:#4AD2FE;border-radius:2px"></div>
<div class="t" style="left:1449.0px;top:764px;font-size:10.7px;line-height:11px;color:#FFFFFF;transform:translate(-50%,-50%) rotate(90deg);letter-spacing:-0.2px">1988.87</div>
<div class="abs" style="left:1462.8px;top:673px;width:19.5px;height:204px;background:#0A99FF;border-radius:2px"></div>
<div class="t" style="left:1472.5px;top:723px;font-size:10.7px;line-height:11px;color:#FFFFFF;transform:translate(-50%,-50%) rotate(90deg);letter-spacing:-0.2px">2690.82</div>
<div class="abs" style="left:1486.4px;top:738px;width:19.5px;height:139px;background:#0A66C8;border-radius:2px"></div>
<div class="t" style="left:1496.2px;top:786px;font-size:10.7px;line-height:11px;color:#FFFFFF;transform:translate(-50%,-50%) rotate(90deg);letter-spacing:-0.2px">1754.88</div>
<div class="t" style="left:1449px;top:908px;font-size:18.4px;line-height:19px;color:#6B7A90;transform:translate(-50%,-50%)">May 2025</div>
<div class="abs" style="left:1592.7px;top:648px;width:19.5px;height:227.39999999999998px;background:#DFD8FB;border-radius:2px"></div>
<div class="t" style="left:1602.5px;top:690px;font-size:10.7px;line-height:11px;color:#2F6FD6;transform:translate(-50%,-50%) rotate(90deg);letter-spacing:-0.2px">2962.48</div>
<div class="abs" style="left:1616.3px;top:714px;width:19.5px;height:161.39999999999998px;background:#B5ECFC;border-radius:2px"></div>
<div class="t" style="left:1626.0px;top:748px;font-size:10.7px;line-height:11px;color:#2F6FD6;transform:translate(-50%,-50%) rotate(90deg);letter-spacing:-0.2px">2164.88</div>
<div class="abs" style="left:1639.9px;top:731px;width:19.5px;height:144.39999999999998px;background:#4AD2FE;border-radius:2px"></div>
<div class="t" style="left:1649.7px;top:765px;font-size:10.7px;line-height:11px;color:#FFFFFF;transform:translate(-50%,-50%) rotate(90deg);letter-spacing:-0.2px">1937.00</div>
<div class="abs" style="left:1663.5px;top:690px;width:19.5px;height:185.39999999999998px;background:#0A99FF;border-radius:2px"></div>
<div class="t" style="left:1673.2px;top:738px;font-size:10.7px;line-height:11px;color:#FFFFFF;transform:translate(-50%,-50%) rotate(90deg);letter-spacing:-0.2px">2620.65</div>
<div class="abs" style="left:1687.1px;top:760px;width:19.5px;height:115.39999999999998px;background:#0A66C8;border-radius:2px"></div>
<div class="t" style="left:1696.9px;top:786px;font-size:10.7px;line-height:11px;color:#FFFFFF;transform:translate(-50%,-50%) rotate(90deg);letter-spacing:-0.2px">1709.11</div>
<div class="t" style="left:1637px;top:908px;font-size:18.4px;line-height:19px;color:#6B7A90;transform:translate(-50%,-50%)">Jun 2025</div>
<div class="t " style="left:1120.6px;top:961.5px;font-size:14.8px;line-height:14.8px;color:#1E1B4B;">Month and Year</div>
</body></html>
